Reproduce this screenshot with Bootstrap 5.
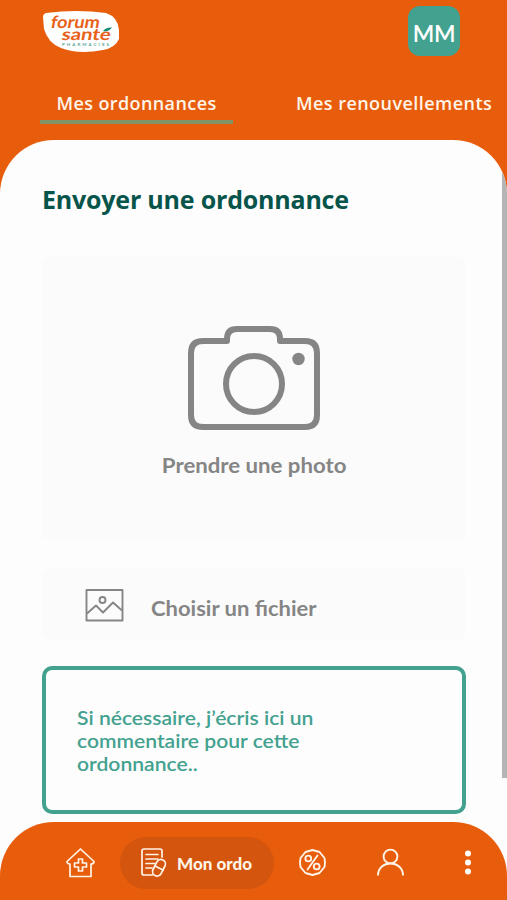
<!DOCTYPE html>
<html lang="fr">
<head>
<meta charset="utf-8">
<meta name="viewport" content="width=device-width, initial-scale=1">
<title>Mon ordo</title>
<link href="https://cdn.jsdelivr.net/npm/bootstrap@5.3.0/dist/css/bootstrap.min.css" rel="stylesheet">
<style>
:root{--brand:#e85d0c;--teal:#43a18f;--grey:#858585}
body{font-family:"Open Sans","Noto Sans",sans-serif;background:#fdfdfd}
.screen{height:900px;overflow:hidden}
.brand-bg{background:var(--brand)}
.top{height:140px}
.top-row{height:81px;padding:6px 47px 0 42px}
.avatar{width:52px;height:50px;border-radius:12px;background:var(--teal);color:#fff;font:600 23px/54px "Lato",sans-serif;letter-spacing:-.2px}
.tabs{height:43px;padding-left:40px}
.tab{font-weight:600;font-size:18px;line-height:44px;color:#fff4e8;border-bottom:4px solid transparent;white-space:nowrap;height:43px}
.tab.current{width:193px;border-color:#829466}
.tab.other{margin-left:63px}
.tab-1{letter-spacing:.4px}.tab-2{letter-spacing:.45px}
.sheet{height:682px;background:#fdfdfd;border-radius:54px 54px 0 0;padding:0 41px 0 42px;overflow:hidden}
.scroll-thumb{right:0;top:0;width:5px;height:638px;background:#b5b5b5}
.title{color:#07544b;font-weight:700;font-size:25px;line-height:34px;letter-spacing:-.2px;padding-top:42px;margin-bottom:40px;white-space:nowrap}
.tile{background:#fbfbfb;color:var(--grey);border-radius:10px}
.photo{height:285px;padding-top:70px}
.label{font:700 20px/26px "Lato",sans-serif;color:var(--grey);white-space:nowrap;transform:scaleX(1.11)}
.photo .label{margin-top:22px}
.file{height:74px;margin-top:26px;padding-left:43px}
.file .label{margin-left:27px;padding-top:7px;transform-origin:0 50%;transform:scaleX(1.1)}
.comment{height:148px;margin-top:25px;border:4px solid var(--teal);border-radius:10px;padding:36px 31px;color:var(--teal);font:600 19px/23px "Lato",sans-serif}
.comment-text{transform-origin:0 50%;transform:scaleX(1.11)}
.dock{height:78px;border-radius:54px 54px 0 0;padding:3px 33px 0 66px;color:#fff4e8}
.pill{width:154px;height:52px;border-radius:26px;background:#d4550d;margin-left:25px;padding-left:21px;gap:9px}
.pill-text{font:900 17px/24px "Lato",sans-serif;color:#fff4e8;white-space:nowrap;padding-top:2px}
.ic-pct{margin-left:25px}
.ic-user{margin-left:51px}
.ic-more{margin-left:61px}
svg{display:block;flex:none;overflow:visible}
</style>
<script src="https://cdn.jsdelivr.net/npm/bootstrap@5.3.0/dist/js/bootstrap.bundle.min.js"></script>
</head>
<body>
<div class="screen d-flex flex-column">
  <header class="top brand-bg">
    <div class="top-row d-flex justify-content-between align-items-start">
      <svg width="78" height="48" viewBox="42 6 78 48" role="img" aria-label="forum santé pharmacies">
        <path d="M46 13Q77 9 106 13Q118 17 119 30L119 39Q115 48 103 50Q79 55 61 48Q48 43 44 29L43 17Q43 14 46 13Z" fill="#fff"/>
        <g font-family="Lato,sans-serif" font-style="normal" font-weight="700" fill="#e8611b">
          <text transform="translate(50 28) skewX(-10)" font-size="17" textLength="49" lengthAdjust="spacingAndGlyphs">forum</text>
          <text transform="translate(61 40) skewX(-10)" font-size="16.500" textLength="49" lengthAdjust="spacingAndGlyphs">santé</text>
        </g>
        <path d="M103 31Q106 27 112 27.500Q109 32 103 31Z" fill="#178b79"/>
        <text x="62" y="45.500" font-family="Lato,sans-serif" font-weight="700" font-size="4.500" textLength="47" fill="#5aa79a">PHARMACIES</text>
      </svg>
      <div class="avatar text-center">MM</div>
    </div>
    <nav class="tabs d-flex">
      <div class="tab current text-center"><span class="tab-1">Mes ordonnances</span></div>
      <div class="tab other"><span class="tab-2">Mes renouvellements</span></div>
    </nav>
  </header>
  <div class="brand-bg">
    <main class="sheet position-relative">
      <div class="scroll-thumb position-absolute"></div>
      <h1 class="title">Envoyer une ordonnance</h1>
      <div class="tile photo d-flex flex-column align-items-center">
        <svg width="132" height="104" viewBox="0 0 132 104" fill="none" stroke="#858585" stroke-width="6" stroke-linejoin="round">
          <path d="M15 15H39V13Q39 3 49 3H82Q92 3 92 13V15H117Q129 15 129 27V89Q129 101 117 101H15Q3 101 3 89V27Q3 15 15 15Z"/>
          <circle cx="66" cy="58" r="28"/><circle cx="110.500" cy="33" r="6.200" fill="#858585" stroke="none"/>
        </svg>
        <div class="label">Prendre une photo</div>
      </div>
      <div class="tile file d-flex align-items-center">
        <svg width="39" height="33" viewBox="0 0 39 33" fill="none" stroke="#858585" stroke-width="1.900" stroke-linejoin="round">
          <rect x="1.500" y="2" width="36" height="30.500"/><circle cx="17.500" cy="12" r="3"/><path d="M2 25.500L11 17.500L18 24.500L28 14.500L37 22.500"/>
        </svg>
        <div class="label">Choisir un fichier</div>
      </div>
      <div class="comment"><div class="comment-text">Si nécessaire, j’écris ici un<br>commentaire pour cette<br>ordonnance..</div></div>
    </main>
  </div>
  <nav class="dock brand-bg d-flex align-items-center">
    <svg width="29" height="30" viewBox="0 0 29 30" fill="none" stroke="currentColor" stroke-width="1.700" stroke-linejoin="round">
      <path d="M14.500 1L28 13.500Q28 16 25 16V28.500H4V16Q1 16 1 13.500Z"/><path d="M12.500 11H16.500V15H20.500V19H16.500V23H12.500V19H8.500V15H12.500Z"/>
    </svg>
    <div class="pill d-flex align-items-center">
      <svg width="27" height="29" viewBox="0 0 27 29" fill="none" stroke="currentColor" stroke-width="1.700" stroke-linecap="round" stroke-linejoin="round">
        <path d="M11.500 27H3Q1 27 1 25V3Q1 1 3 1H19Q21 1 21 3V9M5 6.500H17M5 11H17M5 15.500H14M5 20H11"/>
        <rect x="13.500" y="11" width="9" height="17.500" rx="4.500" transform="rotate(27 18 19.750)"/><path d="M14 18L22 22"/>
      </svg>
      <div class="pill-text">Mon ordo</div>
    </div>
    <svg class="ic-pct" width="27" height="27" viewBox="0 0 27 27" fill="none" stroke="currentColor" stroke-width="1.900" stroke-linecap="round" stroke-linejoin="round">
      <path d="M13.500 1L17 2L20.500 3L23 6L25.500 9L26 13.500L25.500 18L23 21L20.500 24L17 25L13.500 26L10 25L6.500 24L4 21L1.500 18L1 13.500L1.500 9L4 6L6.500 3L10 2Z"/>
      <circle cx="9.300" cy="9.500" r="2.900"/><circle cx="17.700" cy="17.500" r="2.900"/><path d="M18.500 6.500L8.500 20.500"/>
    </svg>
    <svg class="ic-user" width="27" height="27" viewBox="0 0 27 27" fill="none" stroke="currentColor" stroke-width="1.900"><circle cx="13.500" cy="7.500" r="6.900"/><path d="M1 26.500C1 10.500 26 10.500 26 26.500"/></svg>
    <svg class="ic-more" width="6" height="25" viewBox="0 0 6 25" fill="#fff"><circle cx="3" cy="3.500" r="3"/><circle cx="3" cy="12.500" r="3"/><circle cx="3" cy="21.500" r="3"/></svg>
  </nav>
</div>
</body>
</html>
